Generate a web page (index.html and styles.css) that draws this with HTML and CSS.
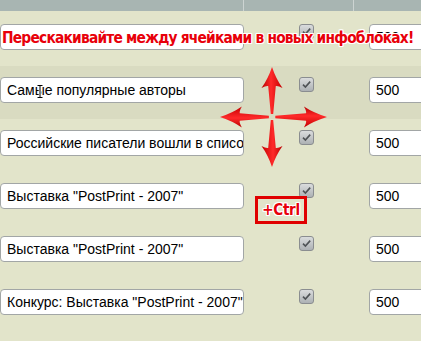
FILE: index.html
```html
<!DOCTYPE html>
<html>
<head>
<meta charset="utf-8">
<link rel="stylesheet" href="styles.css">
</head>
<body>
<div class="page">
  <div class="head">
    <div class="hc h1"></div>
    <div class="hc h2"></div>
    <div class="hc h3"></div>
  </div>

  <div class="row first">
    <div class="c1"><div class="txt"></div></div>
    <div class="c2"><span class="cb"><svg viewBox="0 0 15 15" width="15" height="15"><path d="M4 7.6 L6.4 10 L11.2 4.6" fill="none" stroke="#4f5356" stroke-width="1.6"/></svg></span></div>
    <div class="c3"><div class="num">500</div></div>
  </div>

  <div class="row hover">
    <div class="c1"><div class="txt">Самые популярные авторы</div></div>
    <div class="c2"><span class="cb"><svg viewBox="0 0 15 15" width="15" height="15"><path d="M4 7.6 L6.4 10 L11.2 4.6" fill="none" stroke="#4f5356" stroke-width="1.6"/></svg></span></div>
    <div class="c3"><div class="num">500</div></div>
  </div>

  <div class="row">
    <div class="c1"><div class="txt">Российские писатели вошли в список</div></div>
    <div class="c2"><span class="cb"><svg viewBox="0 0 15 15" width="15" height="15"><path d="M4 7.6 L6.4 10 L11.2 4.6" fill="none" stroke="#4f5356" stroke-width="1.6"/></svg></span></div>
    <div class="c3"><div class="num">500</div></div>
  </div>

  <div class="row">
    <div class="c1"><div class="txt">Выставка "PostPrint - 2007"</div></div>
    <div class="c2"><span class="cb"><svg viewBox="0 0 15 15" width="15" height="15"><path d="M4 7.6 L6.4 10 L11.2 4.6" fill="none" stroke="#4f5356" stroke-width="1.6"/></svg></span></div>
    <div class="c3"><div class="num">500</div></div>
  </div>

  <div class="row">
    <div class="c1"><div class="txt">Выставка "PostPrint - 2007"</div></div>
    <div class="c2"><span class="cb"><svg viewBox="0 0 15 15" width="15" height="15"><path d="M4 7.6 L6.4 10 L11.2 4.6" fill="none" stroke="#4f5356" stroke-width="1.6"/></svg></span></div>
    <div class="c3"><div class="num">500</div></div>
  </div>

  <div class="row">
    <div class="c1"><div class="txt">Конкурс: Выставка "PostPrint - 2007" Состоялся</div></div>
    <div class="c2"><span class="cb"><svg viewBox="0 0 15 15" width="15" height="15"><path d="M4 7.6 L6.4 10 L11.2 4.6" fill="none" stroke="#4f5356" stroke-width="1.6"/></svg></span></div>
    <div class="c3"><div class="num">500</div></div>
  </div>

  <div class="banner">Перескакивайте между ячейками в новых инфоблоках!</div>
  <div class="ctrl">+Ctrl</div>

  <svg class="overlay" width="421" height="341" viewBox="0 0 421 341">
    <defs>
      <linearGradient id="ag" x1="0" y1="0" x2="1" y2="0">
        <stop offset="0" stop-color="#b80000"/>
        <stop offset="0.45" stop-color="#ff2a2a"/>
        <stop offset="1" stop-color="#c40000"/>
      </linearGradient>
      <path id="arr" d="M0 -50 Q4 -38 10.5 -29 Q6 -31.5 3.8 -31 L1.2 -3 L-1.2 -3 L-3.8 -31 Q-6 -31.5 -10.5 -29 Q-4 -38 0 -50 Z" fill="url(#ag)"/>
    </defs>
    <g transform="translate(272 117)">
      <use href="#arr"/>
      <use href="#arr" transform="rotate(180)"/>
      <use href="#arr" transform="rotate(-90) scale(1 1.04)"/>
      <use href="#arr" transform="rotate(90) scale(1 1.1)"/>
    </g>
    <g transform="translate(40 85)" fill="none">
      <path d="M-2.5 0.5 H2.5 M0 0.5 V12.5 M-2.5 12.5 H2.5" stroke="#fff" stroke-width="2.6"/>
      <path d="M-2.5 0.5 H2.5 M0 0.5 V12.5 M-2.5 12.5 H2.5" stroke="#000" stroke-width="1"/>
    </g>
  </svg>
</div>
</body>
</html>
```

FILE: styles.css
```css
html, body {
  margin: 0;
  padding: 0;
  background: #e2e4ca;
}

.page {
  position: relative;
  width: 421px;
  height: 341px;
  overflow: hidden;
  background: #e2e4ca;
  font-family: "Liberation Sans", Arial, sans-serif;
}

.head {
  display: flex;
  height: 11px;
  background: #a8b5b2;
}

.hc {
  height: 11px;
  box-sizing: border-box;
  flex: none;
}

.h1 {
  width: 244px;
  border-right: 1px solid #cdd4d2;
}

.h2 {
  width: 110px;
  border-right: 1px solid #cdd4d2;
}

.h3 {
  flex: 1;
}

.row {
  display: flex;
  align-items: flex-start;
  height: 53px;
  padding-top: 11px;
  box-sizing: border-box;
}

.row.first {
  height: 55px;
  padding-top: 13px;
}

.row.hover {
  background: #d9dbc1;
}

.c1 {
  flex: none;
  width: 244px;
}

.c2 {
  flex: none;
  width: 110px;
  padding-left: 55px;
  box-sizing: border-box;
}

.c3 {
  flex: 1;
  min-width: 0;
  padding-left: 15px;
}

.txt, .num {
  height: 26px;
  box-sizing: border-box;
  border: 1px solid #a2a6a6;
  border-radius: 4px;
  background: #fff;
  font-size: 14px;
  line-height: 24px;
  color: #000;
  white-space: nowrap;
  overflow: hidden;
}

.txt {
  width: 244px;
  padding: 0 3px 0 6px;
}

.num {
  width: 64px;
  padding-left: 6px;
}

.cb {
  display: block;
  width: 15px;
  height: 15px;
  box-sizing: border-box;
  border: 1px solid #8a8d90;
  border-radius: 3px;
  background: linear-gradient(#dadcdd, #adb1b4);
  overflow: hidden;
}

.cb svg {
  display: block;
  margin: -1px 0 0 -1px;
}

.banner {
  position: absolute;
  left: 2px;
  top: 28px;
  font-family: "DejaVu Sans Condensed", "DejaVu Sans", sans-serif;
  font-weight: bold;
  font-size: 16.5px;
  line-height: 20px;
  letter-spacing: -0.85px;
  color: #e8000a;
  white-space: nowrap;
  transform: scaleX(0.93);
  transform-origin: 0 0;
  text-shadow: 1px 0 0 #fff, -1px 0 0 #fff, 0 1px 0 #fff, 0 -1px 0 #fff,
    1px 1px 0 #fff, -1px -1px 0 #fff, 1px -1px 0 #fff, -1px 1px 0 #fff,
    0 0 2px #fff;
}

.ctrl {
  position: absolute;
  left: 255px;
  top: 196px;
  width: 52px;
  height: 28px;
  box-sizing: border-box;
  border: 3px solid #e00000;
  font-family: "DejaVu Sans Condensed", "DejaVu Sans", sans-serif;
  font-weight: bold;
  font-size: 15px;
  line-height: 22px;
  letter-spacing: -0.3px;
  text-align: center;
  color: #e8000a;
  text-shadow: 1px 0 0 #fff, -1px 0 0 #fff, 0 1px 0 #fff, 0 -1px 0 #fff,
    1px 1px 0 #fff, -1px -1px 0 #fff, 1px -1px 0 #fff, -1px 1px 0 #fff;
}

.overlay {
  position: absolute;
  left: 0;
  top: 0;
  pointer-events: none;
}
```
